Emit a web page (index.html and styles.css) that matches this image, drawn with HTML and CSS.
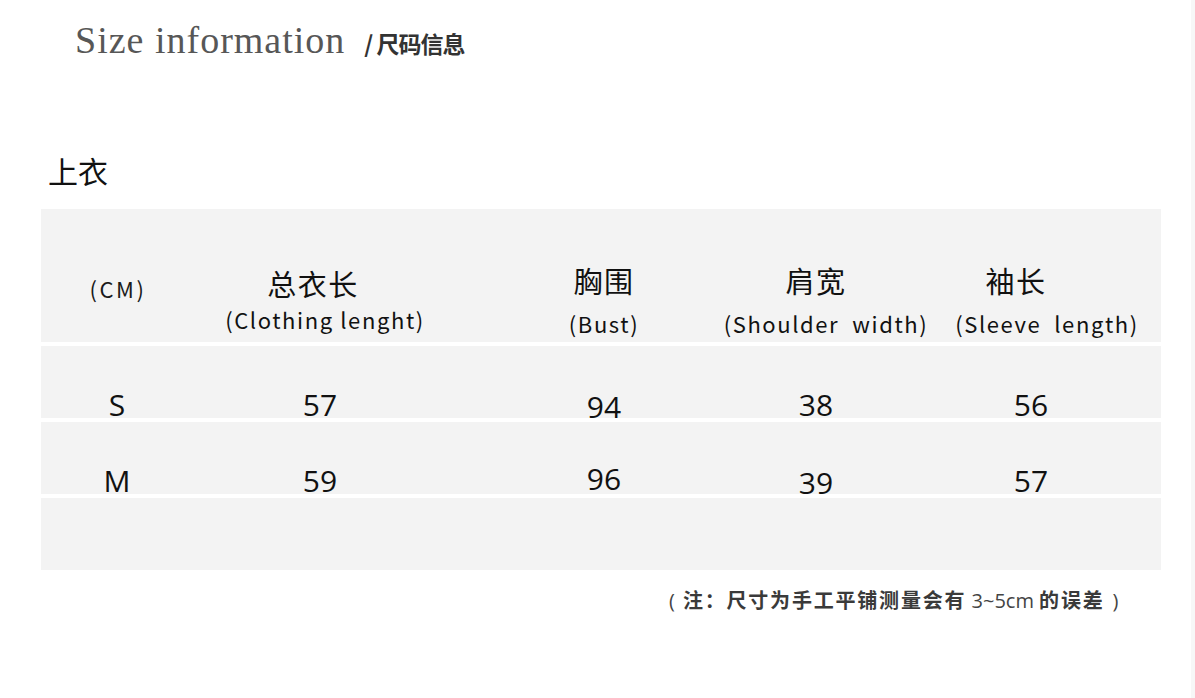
FILE: index.html
```html
<!DOCTYPE html>
<html lang="zh">
<head>
<meta charset="utf-8">
<title>Size information</title>
<link rel="stylesheet" href="styles.css">
</head>
<body>
<div class="page">
  <div class="title">
    <span class="title-en">Size information</span>
    <span class="title-cn">/ 尺码信息</span>
  </div>
  <div class="section">上衣</div>
  <div class="table">
    <div class="row head">
      <div class="cell c1 unit">(CM)</div>
      <div class="cell c2"><span class="cn shift-l">总衣长</span><span class="en shift-r1">(Clothing lenght)</span></div>
      <div class="cell c3"><span class="cn">胸围</span><span class="en">(Bust)</span></div>
      <div class="cell c4"><span class="cn">肩宽</span><span class="en shift-r2">(Shoulder&nbsp; width)</span></div>
      <div class="cell c5"><span class="cn">袖长</span><span class="en shift-r3">(Sleeve&nbsp; length)</span></div>
    </div>
    <div class="row data s">
      <div class="cell c1">S</div>
      <div class="cell c2">57</div>
      <div class="cell c3 low">94</div>
      <div class="cell c4">38</div>
      <div class="cell c5 num5">56</div>
    </div>
    <div class="row data m">
      <div class="cell c1">M</div>
      <div class="cell c2">59</div>
      <div class="cell c3 up">96</div>
      <div class="cell c4 low">39</div>
      <div class="cell c5 num5">57</div>
    </div>
    <div class="row data empty"></div>
  </div>
  <div class="note"><span class="paren">(</span><span class="b">注：尺寸为手工平铺测量会有</span> 3~5cm <span class="b">的误差</span><span class="paren">)</span></div>
</div>
</body>
</html>
```

FILE: styles.css
```css
html, body {
  margin: 0;
  padding: 0;
  background: #ffffff;
}
body {
  width: 1195px;
  height: 698px;
  overflow: hidden;
  font-family: "Open Sans", "Noto Sans CJK SC", sans-serif;
  color: #1a1a1a;
}
.page {
  padding: 18px 34px 0 41px;
  height: 680px;
  box-shadow: inset -4px 0 0 #f7f7f7;
}
.title {
  display: flex;
  align-items: baseline;
  padding-left: 34px;
  height: 50px;
}
.title-en {
  font-family: "Liberation Serif", "DejaVu Serif", serif;
  font-size: 38px;
  color: #575757;
  letter-spacing: 1px;
}
.title-cn {
  font-family: "Noto Sans CJK SC", sans-serif;
  font-weight: 700;
  font-size: 23px;
  color: #333;
  margin-left: 19px;
  letter-spacing: -1px;
}
.section {
  font-family: "Noto Sans CJK SC", sans-serif;
  font-size: 30px;
  color: #111;
  margin-top: 82px;
  margin-left: 7px;
  height: 59px;
  line-height: 40px;
}
.table {
  width: 1120px;
  display: flex;
  flex-direction: column;
  gap: 4px;
}
.row {
  display: grid;
  grid-template-columns: 152px 254px 314px 110px 290px;
  background: #f3f3f3;
}
.row.head {
  height: 133px;
}
.row.data {
  height: 72px;
}
.row.empty {
  height: 72px;
}
.cell {
  display: flex;
  flex-direction: column;
  align-items: center;
  justify-content: flex-end;
  white-space: nowrap;
}
.head .cell {
  padding-bottom: 2px;
}
.head .c2 {
  padding-bottom: 6px;
}
.head .unit {
  justify-content: flex-start;
  padding-top: 63px;
  font-size: 22px;
  font-family: "Noto Sans CJK SC", sans-serif;
  letter-spacing: 2.5px;
  padding-left: 2px;
}
.cn {
  font-family: "Noto Sans CJK SC", sans-serif;
  font-size: 29px;
  line-height: 38px;
  color: #111;
  letter-spacing: 1.5px;
}
.en {
  font-family: "Noto Sans CJK SC", sans-serif;
  font-size: 22px;
  line-height: 34px;
  color: #111;
  letter-spacing: 1.6px;
  margin-top: 7px;
}
.c2 .en { margin-top: -4px; }
.c2 .cn { margin-bottom: 4px; }
.shift-l { margin-right: 14px; }
.shift-r1 { margin-left: 10px; }
.shift-r2 { margin-left: 20px; }
.shift-r3 { margin-left: 62px; }
.data .cell {
  font-size: 30px;
  line-height: 34px;
  color: #111;
}
.s .cell { margin-bottom: -4px; }
.s .cell.low { margin-bottom: -6px; }
.m .cell { margin-bottom: -4px; }
.m .cell.up { margin-bottom: -2px; }
.m .cell.low { margin-bottom: -6px; }
.num5 { padding-left: 30px; }
.note {
  margin-top: 15px;
  margin-left: 620px;
  font-size: 20px;
  color: #444;
  font-family: "Open Sans", "Noto Sans CJK SC", sans-serif;
  white-space: nowrap;
}
.note .paren {
  margin: 0 8px;
}
.note .b {
  font-family: "Noto Sans CJK SC", sans-serif;
  font-weight: 700;
  color: #3a3a3a;
  letter-spacing: 1.8px;
}
```
